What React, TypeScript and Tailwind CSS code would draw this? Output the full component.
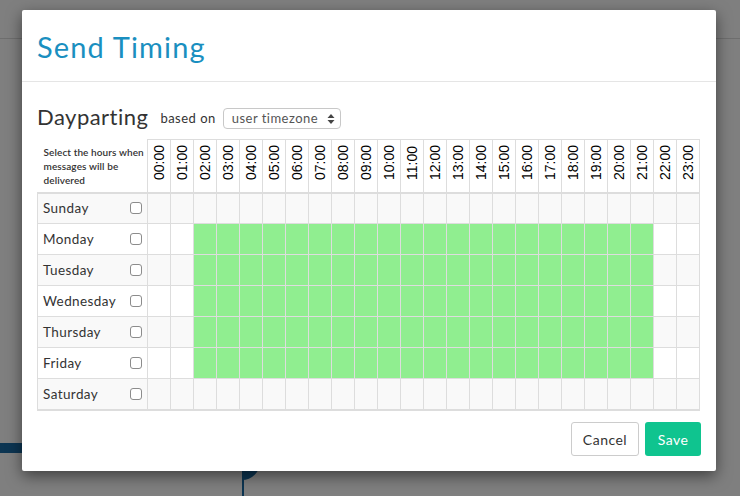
import React, { useState } from 'react';

const DAYS = ['Sunday', 'Monday', 'Tuesday', 'Wednesday', 'Thursday', 'Friday', 'Saturday'];
const HOURS = Array.from({ length: 24 }, (_, i) => `${i.toString().padStart(2, '0')}:00`);

// weekdays 02:00 - 21:00 are on by default
const initialGrid = () =>
  DAYS.map((_, d) => HOURS.map((_, h) => d >= 1 && d <= 5 && h >= 2 && h <= 21));

const SortArrows = () => (
  <svg width="8" height="12" viewBox="0 0 8 12" className="ml-auto">
    <path d="M4 1 L7.5 5 L0.5 5 Z" fill="#444" />
    <path d="M4 11 L7.5 7 L0.5 7 Z" fill="#444" />
  </svg>
);

const App = () => {
  const [grid, setGrid] = useState<boolean[][]>(initialGrid);

  const toggle = (d: number, h: number) => {
    setGrid(g => g.map((row, i) => (i === d ? row.map((v, j) => (j === h ? !v : v)) : row)));
  };

  return (
    <div className="relative h-[496px] w-full overflow-hidden bg-[#7f7f7f] font-['Lato','Open_Sans',sans-serif] tracking-[0.03em]">
      {/* dimmed page behind the overlay */}
      <div className="absolute left-0 right-0 top-[38px] h-px bg-[#6e6e6e]" />
      <div className="absolute left-0 top-[443px] h-[10px] w-[30px] bg-[#0c3552]" />
      <div className="absolute left-[242px] top-[468px] h-[30px] w-[2px] bg-[#0c3552]" />
      <div className="absolute left-[242px] top-[462px] h-[18px] w-[18px] rounded-br-full bg-[#0c3552]" />

      <div className="relative ml-[22px] mt-[10px] flex h-[461px] w-[694px] flex-col rounded-[2px] bg-white shadow-[0_5px_15px_rgba(0,0,0,0.5)]">
        <div className="flex h-[72px] items-center border-b border-[#e5e5e5] px-[15px] pt-[1px]">
          <h1 className="text-[29px] font-normal leading-none tracking-[0.04em] text-[#1a8fc0]">Send Timing</h1>
        </div>

        <div className="flex flex-1 flex-col px-[15px]">
          <div className="mt-[20px] flex h-[30px] items-center">
            <span className="text-[22px] leading-[28px] text-[#333]">Dayparting</span>
            <span className="ml-[12px] mt-[3px] text-[13px] text-[#333]">based on</span>
            <div className="ml-[7px] mt-[3px] flex h-[21px] w-[118px] items-center rounded-[4px] border border-[#c8c8c8] pl-[8px] pr-[5px] text-[13px] text-[#555]">
              user timezone
              <SortArrows />
            </div>
          </div>

          <table className="mt-[7px] w-[663px] table-fixed border-collapse tracking-normal">
            <thead>
              <tr className="h-[53px]">
                <th className="w-[110px] border-b-2 border-[#ddd] pl-[6px] text-left align-middle text-[10px] font-semibold leading-[14px] tracking-[0.01em] text-[#333]">
                  Select the hours when
                  <br />
                  messages will be
                  <br />
                  delivered
                </th>
                {HOURS.map(h => (
                  <th key={h} className="w-[23px] border border-b-2 border-[#ddd] p-0 align-middle">
                    <span className="inline-block rotate-180 font-['Liberation_Sans',Arial,sans-serif] text-[14px] font-normal leading-[22px] text-black [writing-mode:vertical-rl]">
                      {h}
                    </span>
                  </th>
                ))}
              </tr>
            </thead>
            <tbody>
              {DAYS.map((day, d) => (
                <tr
                  key={day}
                  className={`h-[31px] ${d % 2 === 0 ? 'bg-[#f9f9f9]' : 'bg-white'} ${d === DAYS.length - 1 ? 'border-b-2 border-[#ddd]' : ''}`}
                >
                  <td className="border border-[#ddd] px-[5px] text-[13.5px] tracking-[0.03em] text-[#333]">
                    <div className="flex items-center">
                      {day}
                      <input
                        type="checkbox"
                        className="ml-auto h-[12px] w-[12px] appearance-none rounded-[3px] border border-[#8c8c8c] bg-white"
                      />
                    </div>
                  </td>
                  {HOURS.map((h, i) => (
                    <td
                      key={h}
                      onClick={() => toggle(d, i)}
                      className={`border border-[#ddd] p-0 ${grid[d][i] ? 'bg-[#90ee90]' : ''}`}
                    />
                  ))}
                </tr>
              ))}
            </tbody>
          </table>

          <div className="mt-auto mb-[15px] flex justify-end gap-[6px]">
            <button className="h-[34px] w-[68px] rounded-[3px] border border-[#ccc] bg-white text-[14px] text-[#333]">
              Cancel
            </button>
            <button className="h-[34px] w-[56px] rounded-[3px] bg-[#0fc48f] text-[14px] text-white">
              Save
            </button>
          </div>
        </div>
      </div>
    </div>
  );
};

export default App;
